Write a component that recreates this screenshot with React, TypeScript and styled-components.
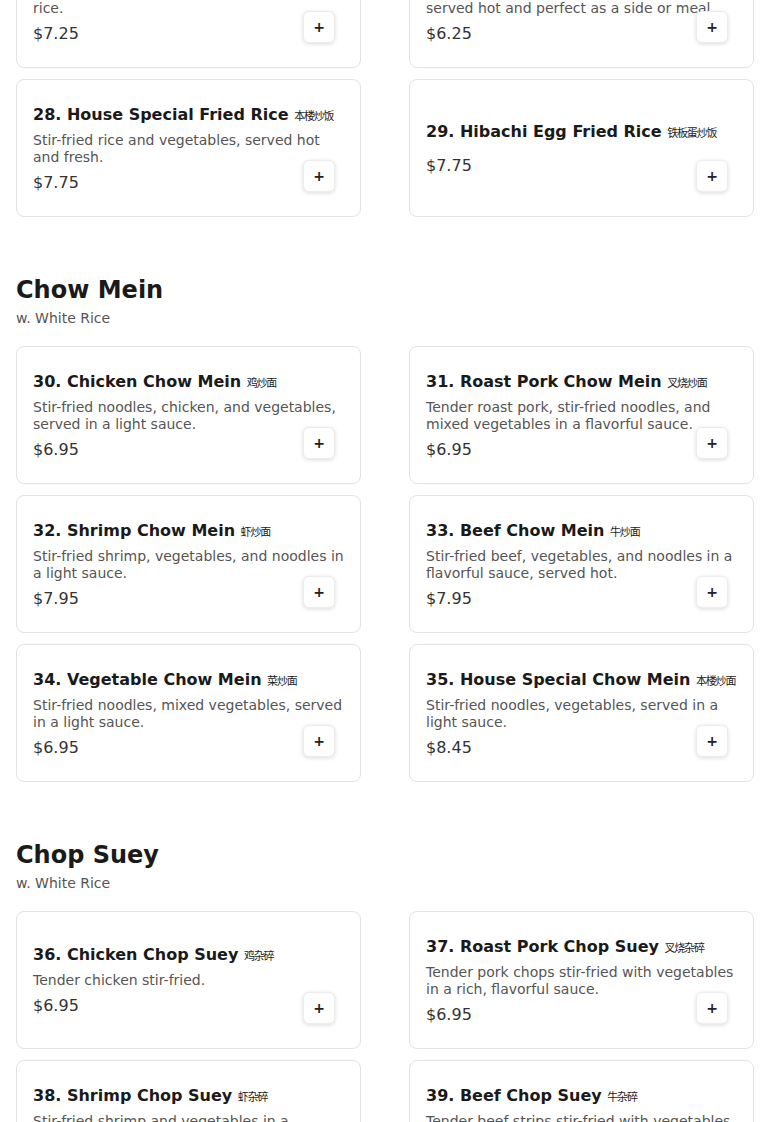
import styled, { createGlobalStyle } from "styled-components";

const GlobalStyle = createGlobalStyle`
  body {
    margin: 0;
    background: #fff;
    font-family: "DejaVu Sans", "Noto Sans CJK SC", sans-serif;
    color: #1a1a1a;
  }
`;

const Page = styled.div`
  padding: 0 16px;
  margin-top: -140px;
`;

const Section = styled.section`
  & + & {
    margin-top: 59px;
  }
`;

const Heading = styled.h2`
  margin: 0 0 6px;
  font-size: 24px;
  line-height: 28px;
  font-weight: 700;
  color: #1a1a1a;
`;

const Sub = styled.p`
  margin: 0 0 19px;
  font-size: 14px;
  line-height: 17px;
  color: #555;
`;

const Grid = styled.div`
  display: grid;
  grid-template-columns: 1fr 1fr;
  column-gap: 48px;
  row-gap: 11px;
`;

const Card = styled.div`
  position: relative;
  box-sizing: border-box;
  min-height: 138px;
  padding: 24px 16px;
  border: 1px solid #e3e3e3;
  border-radius: 8px;
  background: #fff;
  display: flex;
  flex-direction: column;
  justify-content: center;
`;

const Title = styled.div`
  font-size: 16px;
  line-height: 19px;
  font-weight: 700;
  color: #1a1a1a;
  margin-bottom: 8px;
`;

const Cjk = styled.span`
  font-family: "Noto Sans CJK SC", sans-serif;
  font-size: 11px;
  line-height: 1;
  letter-spacing: -1.2px;
  font-weight: 400;
  color: #1a1a1a;
`;

const Desc = styled.div`
  font-size: 14px;
  line-height: 17px;
  color: #555;
`;

const Price = styled.div`
  margin-top: 7px;
  font-size: 16px;
  line-height: 19px;
  color: #333;
`;

const AddButton = styled.button`
  position: absolute;
  right: 25px;
  bottom: 24px;
  width: 32px;
  height: 32px;
  padding: 0;
  border: 1px solid #ececec;
  border-radius: 6px;
  background: #fff;
  box-shadow: 0 1px 4px rgba(0, 0, 0, 0.14);
  font-family: "DejaVu Sans", sans-serif;
  font-size: 14px;
  font-weight: 700;
  line-height: 1;
  color: #222;
  display: flex;
  align-items: center;
  justify-content: center;
  cursor: pointer;
`;

type Item = {
  no: number;
  name: string;
  zh: string;
  desc?: string;
  price: string;
};

const sections: { title: string; sub?: string; items: Item[] }[] = [
  {
    title: "Fried Rice",
    sub: "w. White Rice",
    items: [
      {
        no: 26,
        name: "Beef Fried Rice",
        zh: "牛炒饭",
        desc: "Tender beef and vegetables stir-fried with rice.",
        price: "$7.25",
      },
      {
        no: 27,
        name: "Vegetable Fried Rice",
        zh: "菜炒饭",
        desc: "Classic egg fried rice with fresh scallions, served hot and perfect as a side or meal.",
        price: "$6.25",
      },
      {
        no: 28,
        name: "House Special Fried Rice",
        zh: "本楼炒饭",
        desc: "Stir-fried rice and vegetables, served hot and fresh.",
        price: "$7.75",
      },
      { no: 29, name: "Hibachi Egg Fried Rice", zh: "铁板蛋炒饭", price: "$7.75" },
    ],
  },
  {
    title: "Chow Mein",
    sub: "w. White Rice",
    items: [
      {
        no: 30,
        name: "Chicken Chow Mein",
        zh: "鸡炒面",
        desc: "Stir-fried noodles, chicken, and vegetables, served in a light sauce.",
        price: "$6.95",
      },
      {
        no: 31,
        name: "Roast Pork Chow Mein",
        zh: "叉烧炒面",
        desc: "Tender roast pork, stir-fried noodles, and mixed vegetables in a flavorful sauce.",
        price: "$6.95",
      },
      {
        no: 32,
        name: "Shrimp Chow Mein",
        zh: "虾炒面",
        desc: "Stir-fried shrimp, vegetables, and noodles in a light sauce.",
        price: "$7.95",
      },
      {
        no: 33,
        name: "Beef Chow Mein",
        zh: "牛炒面",
        desc: "Stir-fried beef, vegetables, and noodles in a flavorful sauce, served hot.",
        price: "$7.95",
      },
      {
        no: 34,
        name: "Vegetable Chow Mein",
        zh: "菜炒面",
        desc: "Stir-fried noodles, mixed vegetables, served in a light sauce.",
        price: "$6.95",
      },
      {
        no: 35,
        name: "House Special Chow Mein",
        zh: "本楼炒面",
        desc: "Stir-fried noodles, vegetables, served in a light sauce.",
        price: "$8.45",
      },
    ],
  },
  {
    title: "Chop Suey",
    sub: "w. White Rice",
    items: [
      {
        no: 36,
        name: "Chicken Chop Suey",
        zh: "鸡杂碎",
        desc: "Tender chicken stir-fried.",
        price: "$6.95",
      },
      {
        no: 37,
        name: "Roast Pork Chop Suey",
        zh: "叉烧杂碎",
        desc: "Tender pork chops stir-fried with vegetables in a rich, flavorful sauce.",
        price: "$6.95",
      },
      {
        no: 38,
        name: "Shrimp Chop Suey",
        zh: "虾杂碎",
        desc: "Stir-fried shrimp and vegetables in a delicious brown sauce.",
        price: "$7.95",
      },
      {
        no: 39,
        name: "Beef Chop Suey",
        zh: "牛杂碎",
        desc: "Tender beef strips stir-fried with vegetables in a brown sauce.",
        price: "$7.95",
      },
    ],
  },
];

function MenuCard({ item }: { item: Item }) {
  return (
    <Card>
      <Title>
        {item.no}. {item.name} <Cjk>{item.zh}</Cjk>
      </Title>
      {item.desc && <Desc>{item.desc}</Desc>}
      <Price>{item.price}</Price>
      <AddButton aria-label="Add">+</AddButton>
    </Card>
  );
}

export default function App() {
  return (
    <>
      <GlobalStyle />
      <Page>
        {sections.map((s) => (
          <Section key={s.title}>
            <Heading>{s.title}</Heading>
            {s.sub && <Sub>{s.sub}</Sub>}
            <Grid>
              {s.items.map((it) => (
                <MenuCard key={it.no} item={it} />
              ))}
            </Grid>
          </Section>
        ))}
      </Page>
    </>
  );
}
